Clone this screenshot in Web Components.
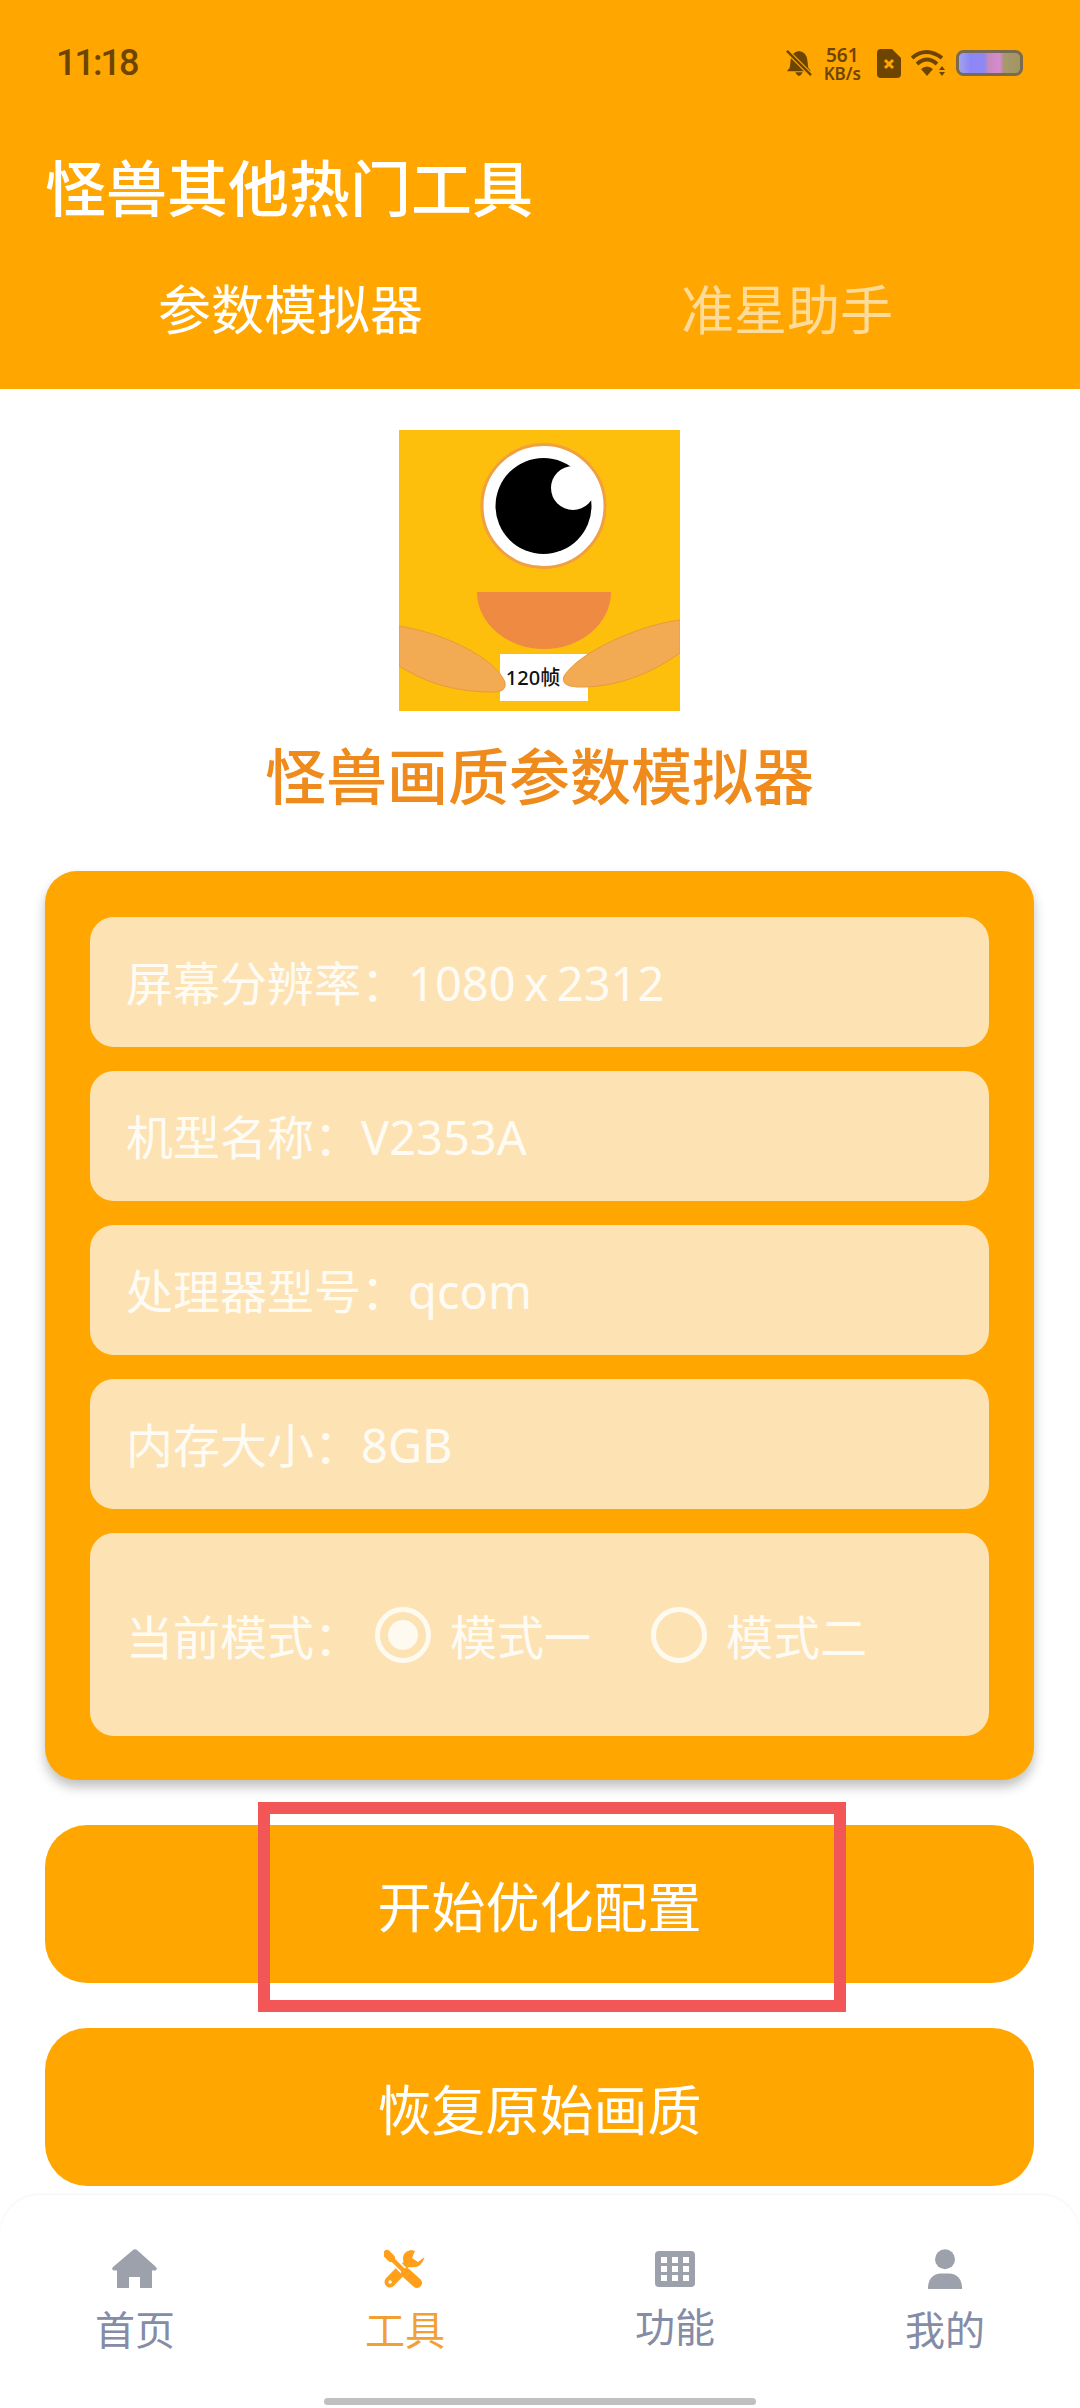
<!DOCTYPE html>
<html lang="zh">
<head>
<meta charset="utf-8">
<title>怪兽画质参数模拟器</title>
<style>
  html, body { margin: 0; background: #fff; }
  body {
    width: 1080px;
    height: 2408px;
    overflow: hidden;
    font-family: "Noto Sans", "Noto Sans CJK SC", sans-serif;
  }
</style>
</head>
<body>
  <app-header heading="怪兽其他热门工具">
    <status-bar time="11:18"></status-bar>
  </app-header>

  <main-panel>
    <brand-logo></brand-logo>
    <info-card>
      <info-row>屏幕分辨率：1080 x 2312</info-row>
      <info-row>机型名称：V2353A</info-row>
      <info-row>处理器型号：qcom</info-row>
      <info-row>内存大小：8GB</info-row>
      <mode-row></mode-row>
    </info-card>
    <action-button marked>开始优化配置</action-button>
    <action-button>恢复原始画质</action-button>
  </main-panel>

  <bottom-nav>
    <nav-item icon="home" label="首页"></nav-item>
    <nav-item icon="tools" label="工具" active></nav-item>
    <nav-item icon="grid" label="功能" raised></nav-item>
    <nav-item icon="user" label="我的"></nav-item>
  </bottom-nav>

<script>
const ICONS = {
  home: `<svg width="46" height="40" viewBox="0 0 46 40"><path fill="currentColor" d="M21 1 Q23 -0.5 25 1 L44 18 Q46 21 43 21.5 L40 21.5 V39 H28 V28 H17 V39 H5 V21.5 H2 Q-1 21 1 18 Z"/></svg>`,
  tools: `<svg width="42" height="40" viewBox="0 0 42 40">
    <path fill="currentColor" d="M27 1 Q17 3 19.5 13 L15.5 17 L20.5 22 L25 18 Q38 20 40.5 8 L34 13 L28 9 L31 2 Z"/>
    <path d="M17 21.5 L6 33" stroke="currentColor" stroke-width="11" stroke-linecap="round" fill="none"/>
    <circle cx="6" cy="33" r="1.8" fill="#fff"/>
    <path d="M7 9 L20 22" stroke="#fff" stroke-width="8" fill="none"/>
    <path d="M3 5 L7 9" stroke="currentColor" stroke-width="8" stroke-linecap="round" fill="none"/>
    <path d="M7 9 L20 22" stroke="currentColor" stroke-width="4.5" fill="none"/>
    <path d="M22 24 L33 34" stroke="currentColor" stroke-width="10" stroke-linecap="round" fill="none"/>
  </svg>`,
  grid: `<svg width="40" height="36" viewBox="0 0 40 36"><rect width="40" height="36" rx="4" fill="currentColor"/><g fill="#fff"><rect x="6" y="6" width="6" height="6"/><rect x="17" y="6" width="6" height="6"/><rect x="28" y="6" width="6" height="6"/><rect x="6" y="15" width="6" height="6"/><rect x="17" y="15" width="6" height="6"/><rect x="28" y="15" width="6" height="6"/><rect x="6" y="24" width="6" height="6"/><rect x="17" y="24" width="6" height="6"/><rect x="28" y="24" width="6" height="6"/></g></svg>`,
  user: `<svg width="36" height="40" viewBox="0 0 36 40"><circle cx="18" cy="10.3" r="10" fill="currentColor"/><path fill="currentColor" d="M1 40 V38 Q2 25 14 24.5 H22 Q34 25 35 38 V40 Z"/></svg>`
};

class StatusBar extends HTMLElement {
  constructor() {
    super();
    const shadow = this.attachShadow({ mode: "open" });
    shadow.innerHTML = `
      <style>
        :host { display: flex; align-items: center; justify-content: space-between;
          height: 126px; padding: 0 57px 0 56px; color: #6e4500; box-sizing: border-box; }
        .time { font: 500 36px Roboto, sans-serif; letter-spacing: -2px; }
        .icons { display: flex; align-items: center; gap: 0; }
        .speed { display: flex; flex-direction: column; align-items: center; margin: 0 16px 0 12px;
          font: 600 17px/17px "Noto Sans", sans-serif; }
        .speed b { font-weight: 600; font-size: 19px; line-height: 20px; }
        svg { display: block; }
      </style>
      <span class="time">${this.getAttribute("time")}</span>
      <div class="icons">
        <svg width="26" height="26" viewBox="0 0 28 28"><path fill="currentColor" d="M14 1 Q22 2 23 11 L24 19 L27 23 H1 L4 19 L5 11 Q6 2 14 1 Z M10 24 H18 Q16 28 14 28 Q12 28 10 24 Z"/><path d="M1 1 L27 27" stroke="#ffa600" stroke-width="5"/><path d="M1 1 L27 27" stroke="currentColor" stroke-width="2.5"/></svg>
        <div class="speed"><b>561</b><span>KB/s</span></div>
        <svg width="24" height="29" viewBox="0 0 24 29"><path fill="currentColor" d="M4 0 H15 L24 9 V25 Q24 29 20 29 H4 Q0 29 0 25 V4 Q0 0 4 0 Z"/><path d="M8 11 L16 19 M16 11 L8 19" stroke="#ffa600" stroke-width="3"/></svg>
        <svg style="margin-left:10px" width="36" height="28" viewBox="0 0 36 28"><g fill="none" stroke="currentColor" stroke-width="4"><path d="M1 9 Q15 -3 31 9"/><path d="M6 15 Q16 6 26 15"/></g><path fill="currentColor" d="M10 20 Q16 15 22 20 L16 27 Z M31 17 L34 21 H28 Z M28 23 H34 L31 27 Z"/></svg>
        <svg style="margin-left:9px" width="67" height="26" viewBox="0 0 67 26">
          <defs><linearGradient id="charge"><stop offset="0" stop-color="#a4a8e8"/><stop offset=".2" stop-color="#8d86f8"/><stop offset=".42" stop-color="#9088f0"/><stop offset=".48" stop-color="#c58ac0"/><stop offset=".66" stop-color="#d88ad4"/><stop offset=".72" stop-color="#a89870"/><stop offset="1" stop-color="#a09660"/></linearGradient></defs>
          <rect x="1.5" y="1.5" width="64" height="23" rx="6" fill="url(#charge)" stroke="#7a6a50" stroke-width="3"/>
        </svg>
      </div>`;
  }
}

class AppHeader extends HTMLElement {
  constructor() {
    super();
    const shadow = this.attachShadow({ mode: "open" });
    shadow.innerHTML = `
      <style>
        :host { display: block; height: 389px; background: #ffa600; color: #fff; }
        h1 { margin: 20px 0 0; padding-left: 45px; font: 500 61px/80px "Noto Sans CJK SC", sans-serif; }
        .tabs { display: flex; padding: 45px 0 0 158px; font: 400 53px/72px "Noto Sans CJK SC", sans-serif; gap: 258px; }
        .off { color: rgba(255,255,255,.6); }
      </style>
      <slot></slot>
      <h1>${this.getAttribute("heading")}</h1>
      <div class="tabs"><span>参数模拟器</span><span class="off">准星助手</span></div>`;
  }
}

class MainPanel extends HTMLElement {
  constructor() {
    super();
    const shadow = this.attachShadow({ mode: "open" });
    shadow.innerHTML = `
      <style>
        :host { display: flex; flex-direction: column; padding: 0 46px 0 45px; }
      </style>
      <slot></slot>`;
  }
}

class BrandLogo extends HTMLElement {
  constructor() {
    super();
    const shadow = this.attachShadow({ mode: "open" });
    shadow.innerHTML = `
      <style>
        :host { display: flex; flex-direction: column; align-items: center; padding-top: 41px; }
        svg { display: block; }
        h2 { margin: 23px 0 0; font: 500 61px/80px "Noto Sans CJK SC", sans-serif; color: #ef8a1d; }
      </style>
      <svg width="281" height="281" viewBox="0 0 281 281">
        <rect width="281" height="281" fill="#fdbf0b"/>
        <circle cx="144.5" cy="76" r="61.5" fill="#fff" stroke="#f0a040" stroke-width="3"/>
        <circle cx="144.5" cy="76" r="48" fill="#000"/>
        <polygon points="171,37 186,40 195,52 193,70 174,58" fill="#fff"/>
        <circle cx="174" cy="58" r="22" fill="#fff"/>
        <path d="M78 162 H212 A67 57 0 0 1 78 162 Z" fill="#ee8a42"/>
        <rect x="101" y="224" width="88" height="47" fill="#fff"/>
        <text x="134" y="255" text-anchor="middle" font-family="Noto Sans, Noto Sans CJK SC, sans-serif" font-size="20" font-weight="500" fill="#111">120帧</text>
        <path d="M0 196 C45 203 96 228 106 252 Q108 262 95 262 C60 262 30 255 0 236 Z" fill="#f2ab52" stroke="#e89a3e" stroke-width="1"/>
        <path d="M281 190 C240 195 180 222 165 246 Q161 256 178 257 C215 258 250 245 281 223 Z" fill="#f2ab52" stroke="#e89a3e" stroke-width="1"/>
      </svg>
      <h2>怪兽画质参数模拟器</h2>`;
  }
}

class InfoCard extends HTMLElement {
  constructor() {
    super();
    const shadow = this.attachShadow({ mode: "open" });
    shadow.innerHTML = `
      <style>
        :host { display: flex; flex-direction: column; gap: 24px; box-sizing: border-box;
          height: 909px; margin-top: 57px; padding: 46px 45px 44px;
          background: #ffa600; border-radius: 32px; box-shadow: 0 7px 12px rgba(0,0,0,.25); }
      </style>
      <slot></slot>`;
  }
}

class InfoRow extends HTMLElement {
  constructor() {
    super();
    const shadow = this.attachShadow({ mode: "open" });
    shadow.innerHTML = `
      <style>
        :host { display: flex; align-items: center; box-sizing: border-box; height: 130px; padding: 0 36px 4px;
          background: #fde3b3; border-radius: 24px; color: rgba(255,255,255,.9); word-spacing: -4px;
          font: 400 47px "Noto Sans", "Noto Sans CJK SC", sans-serif; }
      </style>
      <slot></slot>`;
  }
}

class ModeRow extends HTMLElement {
  constructor() {
    super();
    const shadow = this.attachShadow({ mode: "open" });
    shadow.innerHTML = `
      <style>
        :host { display: flex; align-items: center; box-sizing: border-box; flex: 1; padding: 0 36px;
          background: #fde3b3; border-radius: 24px; color: rgba(255,255,255,.9);
          font: 400 47px "Noto Sans", "Noto Sans CJK SC", sans-serif; }
        .radio { box-sizing: border-box; width: 56px; height: 56px; border: 5px solid #fffaf0; border-radius: 50%;
          display: flex; align-items: center; justify-content: center; margin-right: 19px; }
        .radio i { width: 30px; height: 30px; border-radius: 50%; background: #fffaf0; }
        .first { margin-left: 14px; }
        .second { margin-left: 60px; }
      </style>
      <span>当前模式：</span>
      <span class="radio first"><i></i></span><span>模式一</span>
      <span class="radio second"></span><span>模式二</span>`;
  }
}

class ActionButton extends HTMLElement {
  constructor() {
    super();
    const shadow = this.attachShadow({ mode: "open" });
    shadow.innerHTML = `
      <style>
        :host { position: relative; display: flex; align-items: center; justify-content: center;
          height: 158px; margin-top: 45px; background: #ffa600; border-radius: 42px; color: #fff;
          font: 400 54px "Noto Sans CJK SC", sans-serif; }
        .mark { position: absolute; left: 213px; top: -23px; width: 588px; height: 210px;
          box-sizing: border-box; border: 12px solid #f25656; }
      </style>
      <slot></slot>
      ${this.hasAttribute("marked") ? '<div class="mark"></div>' : ""}`;
  }
}

class BottomNav extends HTMLElement {
  constructor() {
    super();
    const shadow = this.attachShadow({ mode: "open" });
    shadow.innerHTML = `
      <style>
        :host { display: block; box-sizing: border-box; height: 213px; margin-top: 9px; padding-top: 54px;
          border-radius: 40px 40px 0 0; box-shadow: 0 -1px 3px rgba(0,0,0,.05); background: #fff; }
        .items { display: grid; grid-template-columns: repeat(4, 270px); height: 139px; }
        .bar { width: 432px; height: 7px; margin: 10px auto 0; border-radius: 4px; background: #c0c0c0; }
      </style>
      <div class="items"><slot></slot></div>
      <div class="bar"></div>`;
  }
}

class NavItem extends HTMLElement {
  constructor() {
    super();
    const shadow = this.attachShadow({ mode: "open" });
    const active = this.hasAttribute("active");
    shadow.innerHTML = `
      <style>
        :host { display: flex; flex-direction: column; align-items: center; }
        .icon { height: 40px; display: flex; align-items: center; color: ${active ? "#ff9f1a" : "#9ca1ab"}; }
        svg { display: block; }
        span { margin-top: ${this.hasAttribute("raised") ? 11 : 14}px; font: 400 40px/50px "Noto Sans CJK SC", sans-serif;
          color: ${active ? "#f0a035" : "#858ca6"}; }
      </style>
      <div class="icon">${ICONS[this.getAttribute("icon")]}</div>
      <span>${this.getAttribute("label")}</span>`;
  }
}

customElements.define("status-bar", StatusBar);
customElements.define("app-header", AppHeader);
customElements.define("main-panel", MainPanel);
customElements.define("brand-logo", BrandLogo);
customElements.define("info-card", InfoCard);
customElements.define("info-row", InfoRow);
customElements.define("mode-row", ModeRow);
customElements.define("action-button", ActionButton);
customElements.define("bottom-nav", BottomNav);
customElements.define("nav-item", NavItem);
</script>
</body>
</html>
